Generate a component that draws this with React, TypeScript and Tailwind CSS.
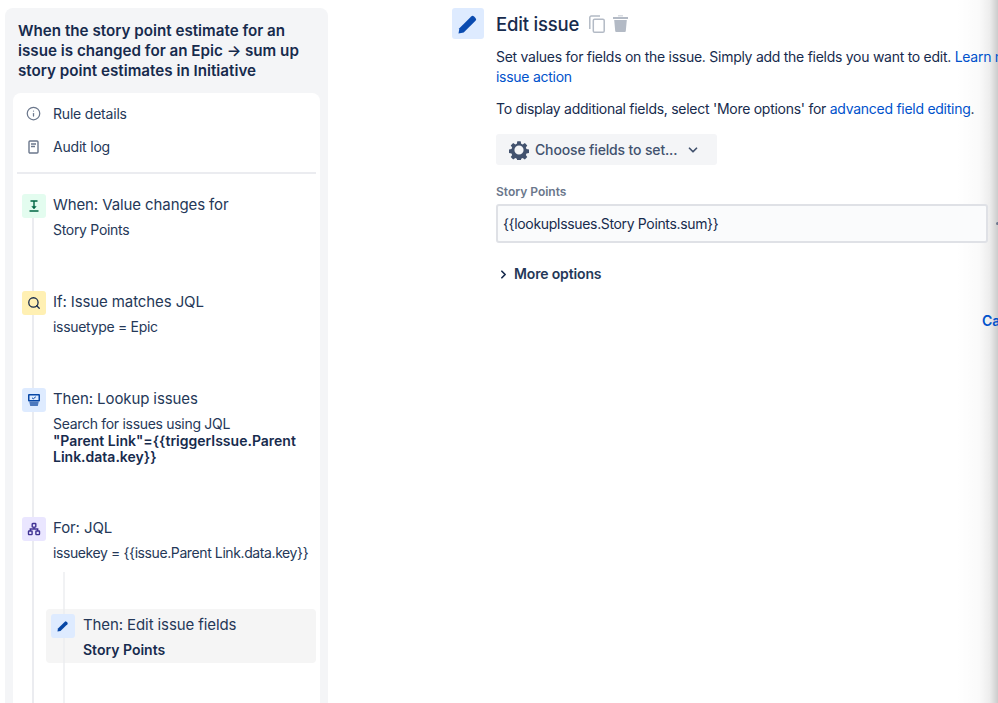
import { ReactNode } from 'react';
import { ChevronDown, ChevronRight, Info, Search } from 'lucide-react';

const font = { fontFamily: 'Inter, "Liberation Sans", sans-serif' };

function Pencil({ className }: { className: string }) {
  return (
    <svg viewBox="0 0 24 24" className={className} fill="currentColor">
      <path d="M2.500 21.500l.9-5.200L15.200 4.500a2 2 0 0 1 2.800 0l1.500 1.500a2 2 0 0 1 0 2.800L7.700 20.600z" />
    </svg>
  );
}

function StepIcon({ className, children }: { className: string; children: ReactNode }) {
  return <div className={`relative z-10 flex h-6 w-6 shrink-0 items-center justify-center rounded-[3px] ${className}`}>{children}</div>;
}

function Step({ icon, title, className, children }: { icon: ReactNode; title: string; className: string; children: ReactNode }) {
  return (
    <div className={`flex ${className}`}>
      {icon}
      <div className="min-w-0">
        <div className="pt-px text-[15px] leading-5 tracking-[-0.1px] text-[#253858]">{title}</div>
        <div className="mt-[7px] text-[14px] leading-4 tracking-[-0.3px] text-[#253858]">{children}</div>
      </div>
    </div>
  );
}

export default function App() {
  return (
    <div className="relative flex h-[703px] w-[998px] overflow-hidden bg-white" style={font}>
      {/* Left rule panel */}
      <aside className="ml-[5px] mt-2 w-[323px] shrink-0 rounded-t-[8px] bg-[#f4f5f7] pl-2 pr-2">
        <h1 className="pl-[5px] pr-1 pt-[13px] text-[15.2px] font-semibold leading-5 text-[#172b4d]">
          When the story point estimate for an issue is changed for an Epic → sum up story point estimates in Initiative
        </h1>
        <div className="relative mt-[12px] h-[620px] rounded-t-[8px] bg-white px-1">
          <div className="flex h-[81px] flex-col border-b-2 border-[#ebecf0] pt-2 text-[14px] tracking-[-0.2px] text-[#253858]">
            <div className="flex h-6 items-center gap-[12px] pl-[9px]">
              <Info size={15} strokeWidth={2} className="text-[#6b778c]" />
              <span>Rule details</span>
            </div>
            <div className="mt-[9.5px] flex h-6 items-center gap-[12px] pl-[9px]">
              <svg viewBox="0 0 12 14" className="h-[14px] w-[15px] text-[#6b778c]" fill="none" stroke="currentColor" strokeWidth="1.4">
                <rect x="1.500" y="1" width="9" height="12" rx="1" />
                <path d="M3.500 4h5M3.500 6.500h4" />
              </svg>
              <span>Audit log</span>
            </div>
          </div>

          {/* rails */}
          <div className="absolute bottom-0 left-[19px] top-[123px] z-[5] w-[2px] bg-[#ebecf0]" />
          <div className="absolute bottom-0 left-[50px] top-[479px] z-[5] w-[2px] bg-[#ebecf0]/70" />

          <div className="pl-[5px]">
            <Step
              className="mt-[20px] gap-[7px]"
              title="When: Value changes for"
              icon={
                <StepIcon className="bg-[#e3fcef] text-[#006644]">
                  <svg viewBox="0 0 16 16" className="h-4 w-4" fill="none" stroke="currentColor" strokeWidth="1.4">
                    <path d="M4.500 3h7M3.500 13h9M8 3.500v6" />
                    <path d="M5.800 8.400h4.400L8 11z" fill="currentColor" strokeWidth="0.5" />
                  </svg>
                </StepIcon>
              }
            >
              Story Points
            </Step>
            <Step
              className="mt-[53px] gap-[7px]"
              title="If: Issue matches JQL"
              icon={
                <StepIcon className="bg-[#fff0b3] text-[#172b4d]">
                  <Search size={14} strokeWidth={2.2} />
                </StepIcon>
              }
            >
              issuetype = Epic
            </Step>
            <Step
              className="mt-[53px] gap-[7px]"
              title="Then: Lookup issues"
              icon={
                <StepIcon className="bg-[#deebff] text-[#0747a6]">
                  <svg viewBox="0 0 16 16" className="h-4 w-4">
                    <rect x="2" y="2" width="12" height="7.500" rx="1" fill="#0747a6" />
                    <rect x="3.500" y="3.500" width="9" height="4.500" fill="#deebff" />
                    <path d="M6 5.800l1.300 1 2.500-2" stroke="#0747a6" strokeWidth="1" fill="none" />
                    <path d="M3.200 9.500h9.600l-1 4.500H4.200z" fill="#4c78bd" />
                  </svg>
                </StepIcon>
              }
            >
              <div className="leading-[16.5px]">Search for issues using JQL</div>
              <div className="font-semibold leading-[16.5px] tracking-normal text-[#172b4d]">"Parent Link"={'{{'}triggerIssue.Parent Link.data.key{'}}'}</div>
            </Step>
            <Step
              className="mt-[51px] gap-[7px]"
              title="For: JQL"
              icon={
                <StepIcon className="bg-[#eae6ff] text-[#403294]">
                  <svg viewBox="0 0 16 16" className="h-4 w-4" fill="none" stroke="currentColor" strokeWidth="1.4">
                    <rect x="6.200" y="2.500" width="3.600" height="3.600" rx="0.6" />
                    <rect x="2.500" y="10" width="3.600" height="3.600" rx="0.6" />
                    <rect x="9.900" y="10" width="3.600" height="3.600" rx="0.6" />
                    <path d="M8 6v2M4.300 10V8h7.400v2" />
                  </svg>
                </StepIcon>
              }
            >
              <span className="whitespace-nowrap tracking-[-0.4px]">issuekey = {'{{'}issue.Parent Link.data.key{'}}'}</span>
            </Step>
            <div className="relative ml-[24px] mt-[48px] h-[54px] w-[270px] rounded-[4px] bg-[#f5f5f5]">
              <Step
                className="gap-2 pl-[5px] pt-[5px]"
                title="Then: Edit issue fields"
                icon={
                  <StepIcon className="bg-[#deebff] text-[#0747a6]">
                    <Pencil className="h-[14px] w-[14px]" />
                  </StepIcon>
                }
              >
                <span className="font-semibold tracking-normal text-[#172b4d]">Story Points</span>
              </Step>
            </div>
          </div>
        </div>
      </aside>

      {/* Right editor */}
      <main className="relative z-10 ml-[124px] w-[700px] shrink-0 pt-2">
        <div className="flex items-center">
          <div className="flex h-[31px] w-8 items-center justify-center rounded-[3px] bg-[#deebff] text-[#0a4bb0]">
            <Pencil className="h-6 w-6" />
          </div>
          <h2 className="ml-3 text-[18.5px] font-medium leading-6 tracking-[-0.2px] text-[#172b4d]">Edit issue</h2>
          <svg viewBox="0 0 16 18" className="ml-[10px] h-[18px] w-4 text-[#b3bac5]" fill="none" stroke="currentColor" strokeWidth="1.500">
            <path d="M11 1H2.300A1.500 1.500 0 0 0 .8 2.500V14" />
            <rect x="4.300" y="4.300" width="10.900" height="12.900" rx="1.300" />
          </svg>
          <svg viewBox="0 0 15 17" className="ml-2 h-[17px] w-[15px]" fill="#b3bac5">
            <path d="M5 1.300h5V.4H5zM0 2h15v2H0zM1.200 5h12.600l-1 11a1 1 0 0 1-1 1H3.200a1 1 0 0 1-1-1z" />
          </svg>
        </div>
        <div className="ml-11 text-[14px] leading-5 tracking-[-0.27px] text-[#172b4d]">
          <p className="mt-2 whitespace-nowrap">
            Set values for fields on the issue. Simply add the fields you want to edit. <span className="text-[#0052cc]">Learn more about the edit</span>
          </p>
          <p className="text-[#0052cc]">issue action</p>
          <p className="mt-[12px]">
            To display additional fields, select 'More options' for <span className="text-[#0052cc]">advanced field editing</span>.
          </p>
          <button className="mt-[15px] flex h-[31px] w-[221px] items-center rounded-[3px] bg-[#f4f5f7] pl-[13px] text-[14px] font-medium tracking-[-0.15px] text-[#42526e]">
            <svg viewBox="0 0 24 24" className="h-[20px] w-[20px]" fill="#42526e">
              <path fillRule="evenodd" d="M10 1.500h4l.6 3 1.800.8 2.600-1.700 2.900 2.900-1.700 2.600.8 1.800 3 .6v4l-3 .6-.8 1.800 1.700 2.600-2.900 2.900-2.600-1.700-1.800.8-.6 3h-4l-.6-3-1.800-.8-2.600 1.700-2.900-2.900 1.700-2.600-.8-1.800-3-.6v-4l3-.6.8-1.800-1.700-2.600 2.900-2.900 2.600 1.700 1.800-.8zM12 6.500a5.500 5.500 0 1 0 0 11 5.500 5.500 0 0 0 0-11z" />
            </svg>
            <span className="ml-[6px]">Choose fields to set...</span>
            <ChevronDown size={14} strokeWidth={3} className="ml-[9px]" />
          </button>
          <div className="mt-[19px] text-[12px] font-semibold leading-4 tracking-normal text-[#6b778c]">Story Points</div>
          <div className="mt-[4px] flex items-center">
            <div className="flex h-[39px] w-[492px] items-center rounded-[3px] border-2 border-[#dfe1e6] bg-[#fafbfc] pl-[5px] text-[14px] tracking-[-0.35px] text-[#172b4d]">
              {'{{'}lookupIssues.Story Points.sum{'}}'}
            </div>
            <span className="ml-[8px] h-[3px] w-[3px] rounded-full bg-[#6b778c]" />
          </div>
          <div className="mt-[21px] flex items-center font-semibold tracking-[-0.15px] text-[#253858]">
            <ChevronRight size={13} strokeWidth={3.2} className="ml-[1px] text-[#172b4d]" />
            <span className="ml-[4px]">More options</span>
          </div>
          <div className="mt-[27px] pl-[486px] font-semibold tracking-normal text-[#0052cc]">Cancel</div>
        </div>
      </main>

      {/* right edge shadow */}
      <div className="absolute bottom-0 right-0 top-0 w-[42px] bg-[linear-gradient(to_right,rgba(0,0,0,0)_0%,rgba(0,0,0,0.02)_55%,rgba(0,0,0,0.07)_80%,rgba(0,0,0,0.2)_100%)]" />
    </div>
  );
}
